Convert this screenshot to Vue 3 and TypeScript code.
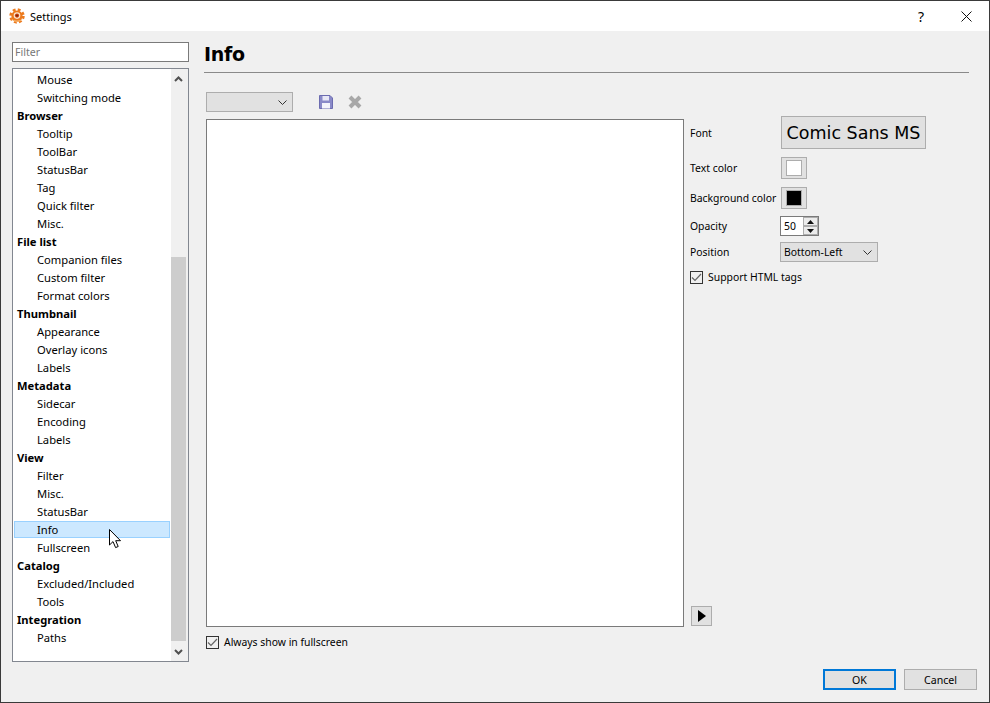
<template>
  <div class="win">
    <header class="titlebar">
      <svg class="logo" viewBox="0 0 16 16" width="16" height="16">
        <circle cx="8" cy="8" r="6.2" fill="none" stroke="#ec7a1e" stroke-width="3" stroke-dasharray="2.7 2.17" />
        <circle cx="8" cy="8" r="5.6" fill="#ec7a1e" />
        <path d="M2.4 10.5C3.6 15 12.4 15 13.6 10.5C12 13 4 13 2.4 10.5Z" fill="#f6b26b" />
        <circle cx="8" cy="7.6" r="3.3" fill="#fbe6d0" />
        <circle cx="8" cy="7.6" r="2.1" fill="#c2410c" />
        <circle cx="8" cy="7.6" r="0.9" fill="#7c1d06" />
      </svg>
      <span class="title">Settings</span>
      <span class="help">?</span>
      <svg class="close" viewBox="0 0 11 11" width="11" height="11">
        <path d="M0.5 0.5L10.5 10.5M10.5 0.5L0.5 10.5" stroke="#111" fill="none" />
      </svg>
    </header>

    <div class="body">
      <aside class="side">
        <input class="filter" placeholder="Filter" />
        <div class="tree">
          <ul class="rows">
            <li
              v-for="(row, i) in rows"
              :key="i"
              :class="{ group: row.group, active: row.label === 'Info' }"
            >{{ row.label }}</li>
          </ul>
          <div class="scroll">
            <svg class="arrow" viewBox="0 0 9 6" width="9" height="6">
              <path d="M1 5L4.5 1.5L8 5" fill="none" stroke="#505050" stroke-width="2" />
            </svg>
            <div class="track"><div class="thumb"></div></div>
            <svg class="arrow" viewBox="0 0 9 6" width="9" height="6">
              <path d="M1 1L4.5 4.5L8 1" fill="none" stroke="#505050" stroke-width="2" />
            </svg>
          </div>
        </div>
      </aside>

      <main class="main">
        <h1 class="heading">Info</h1>
        <div class="toolbar">
          <div class="combo preset"><svg class="chev" viewBox="0 0 9 5" width="9" height="5"><path d="M0.5 0.5L4.5 4.5L8.5 0.5" fill="none" stroke="#333" /></svg></div>
          <svg class="tool" viewBox="0 0 14 14" width="14" height="14">
            <path d="M0.5 0.5H11L13.5 3V13.5H0.5Z" fill="#8a8ac8" stroke="#6c6cb0" />
            <rect x="3.5" y="1" width="6.5" height="4.5" fill="#e8e8f6" />
            <rect x="3" y="8" width="8" height="5.5" fill="#f4f4fb" />
          </svg>
          <svg class="tool" viewBox="0 0 14 14" width="14" height="14">
            <path d="M2 2L12 12M12 2L2 12" stroke="#a8a8a8" stroke-width="4" fill="none" />
          </svg>
        </div>

        <div class="editor">
          <div class="left">
            <div class="textarea"></div>
            <label class="check always"><span class="box"><svg viewBox="0 0 11 9" width="11" height="9"><path d="M1 4.5L4 7.5L10 1" fill="none" stroke="#666" stroke-width="1.2" /></svg></span>Always show in fullscreen</label>
          </div>

          <div class="right">
            <div class="field f-font">
              <span class="lbl">Font</span>
              <button class="btn fontbtn">Comic Sans MS</button>
            </div>
            <div class="field f-color">
              <span class="lbl">Text color</span>
              <div class="btn swatch"><i class="white"></i></div>
            </div>
            <div class="field f-bg">
              <span class="lbl">Background color</span>
              <div class="btn swatch"><i class="black"></i></div>
            </div>
            <div class="field f-opacity">
              <span class="lbl">Opacity</span>
              <div class="spin">
                <span class="val">50</span>
                <div class="steps">
                  <span><svg viewBox="0 0 7 4" width="7" height="4"><path d="M0 4L3.5 0L7 4Z" fill="#111" /></svg></span>
                  <span><svg viewBox="0 0 7 4" width="7" height="4"><path d="M0 0L3.5 4L7 0Z" fill="#111" /></svg></span>
                </div>
              </div>
            </div>
            <div class="field f-pos">
              <span class="lbl">Position</span>
              <div class="combo pos">Bottom-Left<svg class="chev" viewBox="0 0 9 5" width="9" height="5"><path d="M0.5 0.5L4.5 4.5L8.5 0.5" fill="none" stroke="#333" /></svg></div>
            </div>
            <label class="check html"><span class="box"><svg viewBox="0 0 11 9" width="11" height="9"><path d="M1 4.5L4 7.5L10 1" fill="none" stroke="#666" stroke-width="1.2" /></svg></span>Support HTML tags</label>
            <div class="btn play"><svg viewBox="0 0 8 12" width="8" height="12"><path d="M0 0L8 6L0 12Z" fill="#000" /></svg></div>
          </div>
        </div>
      </main>
    </div>

    <footer class="footer">
      <button class="btn act ok">OK</button>
      <button class="btn act">Cancel</button>
    </footer>

    <svg class="cursor" viewBox="0 0 13 20" width="13" height="20">
      <path d="M0.5 0.5V16L4 12.6L6.6 18.6L9.2 17.5L6.7 11.7H11.5Z" fill="#fff" stroke="#000" />
    </svg>
  </div>
</template>

<script setup lang="ts">
interface Row {
  label: string;
  group?: boolean;
}

const g = (label: string): Row => ({ label, group: true });
const r = (label: string): Row => ({ label });

const rows: Row[] = [
  r('Mouse'), r('Switching mode'),
  g('Browser'), r('Tooltip'), r('ToolBar'), r('StatusBar'), r('Tag'), r('Quick filter'), r('Misc.'),
  g('File list'), r('Companion files'), r('Custom filter'), r('Format colors'),
  g('Thumbnail'), r('Appearance'), r('Overlay icons'), r('Labels'),
  g('Metadata'), r('Sidecar'), r('Encoding'), r('Labels'),
  g('View'), r('Filter'), r('Misc.'), r('StatusBar'), r('Info'), r('Fullscreen'),
  g('Catalog'), r('Excluded/Included'), r('Tools'),
  g('Integration'), r('Paths'),
];
</script>

<style scoped>
.win {
  position: relative;
  width: 990px;
  height: 703px;
  box-sizing: border-box;
  border: 1px solid #3a3a3a;
  background: #f0f0f0;
  display: flex;
  flex-direction: column;
  font: 11.2px "Noto Sans", "Open Sans", sans-serif;
  color: #000;
  overflow: hidden;
}
.titlebar {
  height: 30px;
  background: #fff;
  display: flex;
  align-items: center;
  padding-left: 8px;
  flex-shrink: 0;
}
.title { margin-left: 5px; font-size: 11px; }
.help { margin-left: auto; font-size: 14px; width: 10px; }
.close { margin-left: 33px; margin-right: 17px; }

.body {
  flex: 1;
  display: flex;
  min-height: 0;
  padding: 11px 20px 0 11px;
}
.side {
  width: 177px;
  display: flex;
  flex-direction: column;
  gap: 6px;
}
.filter {
  box-sizing: border-box;
  height: 20px;
  width: 100%;
  border: 1px solid #7a7a7a;
  background: #fff;
  padding: 0 2px;
  font: inherit;
  font-size: 10.6px;
  outline: none;
}
.filter::placeholder { color: #777; }
.tree {
  height: 594px;
  box-sizing: border-box;
  border: 1px solid #828790;
  background: #fff;
  display: flex;
}
.rows {
  list-style: none;
  margin: 0;
  padding: 2px 1px 0 1px;
  flex: 1;
  min-width: 0;
}
.rows li {
  height: 18px;
  line-height: 17px;
  padding-left: 23px;
  box-sizing: border-box;
  white-space: nowrap;
}
.rows li.group { font-weight: 700; padding-left: 3px; }
.rows li.active {
  height: 17px;
  margin-bottom: 1px;
  background: #cce8ff;
  border: 1px solid #99d1ff;
  padding-left: 22px;
  line-height: 15px;
}
.scroll {
  width: 17px;
  box-sizing: border-box;
  padding-right: 2px;
  display: flex;
  flex-direction: column;
  align-items: center;
  background: #f0f0f0;
}
.arrow { margin: 7px 0 6px; flex-shrink: 0; }
.track { flex: 1; width: 100%; padding-top: 169px; padding-bottom: 1px; box-sizing: border-box; }
.thumb { height: 100%; background: #cdcdcd; }

.main {
  flex: 1;
  min-width: 0;
  padding-left: 15px;
  display: flex;
  flex-direction: column;
}
.heading {
  margin: 0;
  height: 30px;
  font: 700 19px "DejaVu Sans", sans-serif;
  letter-spacing: -0.3px;
  line-height: 24px;
  border-bottom: 1px solid #8a8a8a;
  box-sizing: content-box;
}
.toolbar {
  display: flex;
  align-items: center;
  margin: 19px 0 0 2px;
  height: 20px;
}
.combo {
  box-sizing: border-box;
  height: 20px;
  background: #e1e1e1;
  border: 1px solid #adadad;
  display: flex;
  align-items: center;
  padding: 0 5px 0 3px;
}
.chev { margin-left: auto; }
.preset { width: 87px; margin-right: 26px; }
.tool { margin-right: 15px; }

.editor {
  display: flex;
  margin: 7px 0 0 2px;
  font-size: 10.4px;
}
.left { width: 478px; }
.textarea {
  box-sizing: border-box;
  height: 508px;
  background: #fff;
  border: 1px solid #7a7a7a;
}
.check {
  display: flex;
  align-items: center;
  gap: 5px;
  height: 14px;
}
.always { margin-top: 8px; }
.box {
  box-sizing: border-box;
  width: 13px;
  height: 13px;
  border: 1px solid #333;
  background: #f0f0f0;
  display: flex;
  align-items: center;
  justify-content: center;
}

.right {
  margin-left: 6px;
  flex: 1;
  display: flex;
  flex-direction: column;
  height: 507px;
}
.field {
  display: flex;
  align-items: center;
}
.lbl {
  width: 90px;
  flex-shrink: 0;
  white-space: nowrap;
}
.f-font { margin: -3px 0 8px; }
.f-color { margin-bottom: 8px; }
.f-bg { margin-bottom: 7px; }
.f-opacity { margin-bottom: 6px; }

.btn {
  box-sizing: border-box;
  background: #e1e1e1;
  border: 1px solid #adadad;
  font: inherit;
  color: #000;
  padding: 0;
}
.fontbtn {
  width: 145px;
  height: 33px;
  margin-left: 1px;
  font: 17.5px "DejaVu Sans", sans-serif;
}
.swatch {
  width: 26px;
  height: 22px;
  margin-left: 1px;
  display: flex;
  align-items: center;
  justify-content: center;
}
.swatch i {
  display: block;
  box-sizing: border-box;
  width: 16px;
  height: 16px;
  border: 1px solid #adadad;
}
.swatch .white { background: #fff; }
.swatch .black { background: #000; }
.spin {
  box-sizing: border-box;
  width: 39px;
  height: 20px;
  background: #fff;
  border: 1px solid #7a7a7a;
  display: flex;
  align-items: center;
  padding-left: 3px;
}
.val { flex: 1; }
.steps {
  width: 15px;
  height: 18px;
  display: flex;
  flex-direction: column;
}
.steps span {
  flex: 1;
  box-sizing: border-box;
  background: #ececec;
  border: 1px solid #adadad;
  display: flex;
  align-items: center;
  justify-content: center;
}
.pos { width: 98px; }
.html { margin-top: 8px; }
.play {
  width: 21px;
  height: 20px;
  margin: auto 0 0 1px;
  display: flex;
  align-items: center;
  justify-content: center;
}

.footer {
  display: flex;
  justify-content: flex-end;
  gap: 8px;
  height: 21px;
  padding: 0 12px 12px 0;
  flex-shrink: 0;
  font-size: 10.6px;
}
.act { width: 73px; height: 21px; }
.ok { border: 2px solid #0078d7; }

.cursor { position: absolute; left: 108px; top: 528px; }
</style>
